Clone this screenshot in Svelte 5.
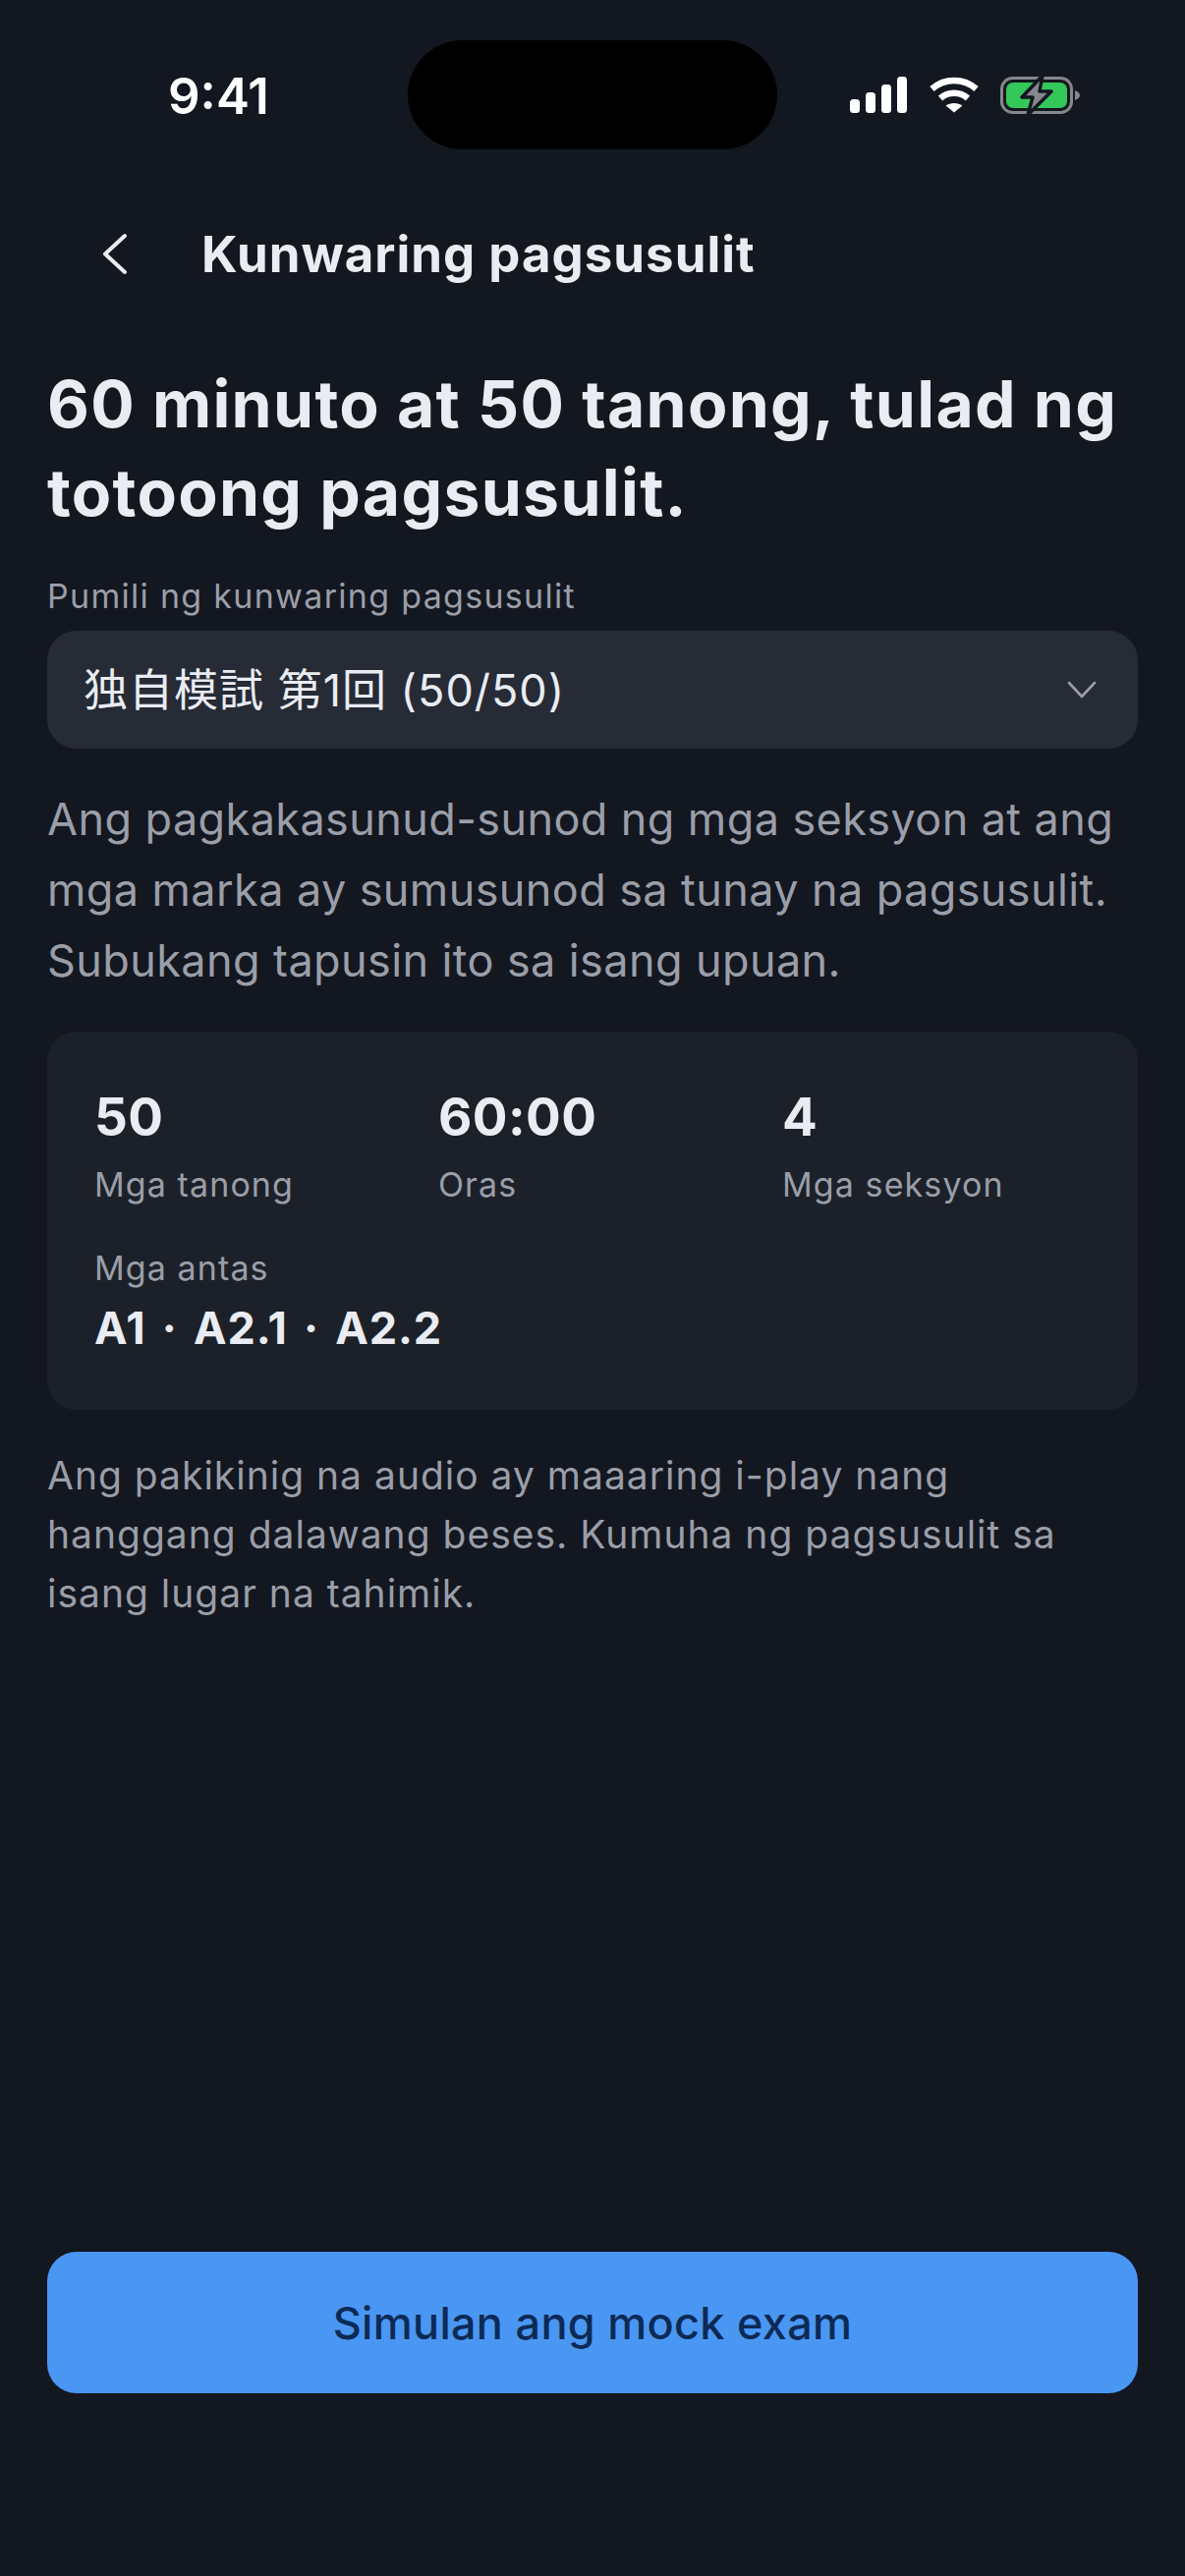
<script lang="ts">
  const stats = [
    { value: '50', label: 'Mga tanong' },
    { value: '60:00', label: 'Oras' },
    { value: '4', label: 'Mga seksyon' }
  ];
</script>

<div class="screen">
  <header class="status">
    <span class="time">9:41</span>
    <div class="island"></div>
    <div class="status-icons">
      <svg class="signal" width="58" height="37" viewBox="0 0 58 37" fill="#fff">
        <rect x="0" y="23" width="10" height="14" rx="3.5" />
        <rect x="16" y="16" width="10" height="21" rx="3.5" />
        <rect x="32" y="8" width="10" height="29" rx="3.5" />
        <rect x="48" y="0" width="10" height="37" rx="3.5" />
      </svg>
      <svg class="wifi" width="50" height="37" viewBox="0 0 50 37" fill="none" stroke="#fff" stroke-width="6.5">
        <path d="M2.5 12.5C15 1 35 1 47.5 12.5" />
        <path d="M11 22C19 15 31 15 39 22" />
        <path d="M25 36.5 L16.5 29.5C21 26 29 26 33.5 29.5Z" fill="#fff" stroke="none" />
      </svg>
      <svg class="battery" width="82" height="42" viewBox="0 0 82 42">
        <rect x="1.5" y="3.5" width="71" height="35" rx="11" fill="none" stroke="#85878c" stroke-width="3" />
        <rect x="6" y="8" width="62" height="26" rx="7" fill="#34c759" />
        <path d="M76 16v10c3-1 5-3 5-5s-2-4-5-5Z" fill="#85878c" />
        <path d="M43 1 22 23h11l-5 18 24-24H40Z" fill="#85878c" stroke="#131720" stroke-width="3.5" stroke-linejoin="round" />
      </svg>
    </div>
  </header>

  <nav class="topbar">
    <svg class="back" width="27" height="43" viewBox="0 0 27 43" fill="none" stroke="#e9ecf2" stroke-width="4" stroke-linecap="round" stroke-linejoin="round">
      <path d="M24 3 4 21.5 24 40" />
    </svg>
    <h2>Kunwaring pagsusulit</h2>
  </nav>

  <main class="content">
    <h1>60 minuto at 50 tanong, tulad ng totoong pagsusulit.</h1>

    <div class="field-label">Pumili ng kunwaring pagsusulit</div>
    <div class="select">
      <span>独自模試 第1回 (50/50)</span>
      <svg width="30" height="18" viewBox="0 0 30 18" fill="none" stroke="#9a9ea8" stroke-width="2.6" stroke-linecap="round" stroke-linejoin="round">
        <path d="M2 2 15 16 28 2" />
      </svg>
    </div>

    <p class="intro">Ang pagkakasunud-sunod ng mga seksyon at ang mga marka ay sumusunod sa tunay na pagsusulit. Subukang tapusin ito sa isang upuan.</p>

    <section class="card">
      <div class="stats">
        {#each stats as stat}
          <div>
            <div class="value">{stat.value}</div>
            <div class="label">{stat.label}</div>
          </div>
        {/each}
      </div>
      <div class="label levels-label">Mga antas</div>
      <div class="levels">A1 · A2.1 · A2.2</div>
    </section>

    <p class="note">Ang pakikinig na audio ay maaaring i-play nang hanggang dalawang beses. Kumuha ng pagsusulit sa isang lugar na tahimik.</p>
  </main>

  <button class="start">Simulan ang mock exam</button>
</div>

<style>
  :global(body) {
    margin: 0;
    background: #131720;
  }

  .screen {
    height: 2622px;
    display: flex;
    flex-direction: column;
    background: #131720;
    font-family: Inter, 'Noto Sans CJK JP', sans-serif;
    overflow: hidden;
  }

  .status {
    display: grid;
    grid-template-columns: 1fr 376px 1fr;
    align-items: center;
    height: 111px;
    margin-top: 41px;
  }

  .time {
    padding: 2px 0 0 171px;
    font-size: 51px;
    font-weight: 600;
    color: #fff;
  }

  .island {
    height: 111px;
    border-radius: 56px;
    background: #000;
  }

  .status-icons {
    display: flex;
    align-items: center;
    padding-left: 74px;
  }

  .wifi {
    margin-left: 23px;
  }

  .battery {
    margin-left: 22px;
  }

  .topbar {
    display: flex;
    align-items: center;
    height: 84px;
    margin-top: 64px;
    padding-left: 103px;
  }

  .topbar h2 {
    margin: 0 0 0 75px;
    font-size: 51px;
    font-weight: 700;
    letter-spacing: 1px;
    color: #e9ecf2;
  }

  .content {
    padding: 0 48px;
  }

  h1 {
    margin: 66px 0 0;
    font-size: 66px;
    line-height: 90px;
    font-weight: 700;
    letter-spacing: 1.3px;
    color: #e9ecf2;
  }

  .field-label {
    margin-top: 39px;
    font-size: 34px;
    line-height: 44px;
    letter-spacing: 1.3px;
    color: #9a9ea8;
  }

  .select {
    display: flex;
    align-items: center;
    justify-content: space-between;
    height: 120px;
    margin-top: 13px;
    padding: 0 42px 0 37px;
    border-radius: 30px;
    background: #262b36;
    font-size: 45px;
    letter-spacing: 1px;
    color: #e9ecf2;
  }

  .select span {
    padding-bottom: 5px;
  }

  .intro {
    margin: 36px 0 0;
    font-size: 45px;
    line-height: 72px;
    letter-spacing: 0.4px;
    color: #9a9ea8;
  }

  .card {
    height: 385px;
    box-sizing: border-box;
    margin-top: 36px;
    padding: 48px;
    border-radius: 30px;
    background: #1c2129;
  }

  .stats {
    display: grid;
    grid-template-columns: repeat(3, 350px);
  }

  .value {
    font-size: 53px;
    line-height: 78px;
    font-weight: 700;
    letter-spacing: 0.4px;
    color: #e9ecf2;
  }

  .label {
    margin-top: 8px;
    font-size: 34px;
    line-height: 44px;
    letter-spacing: 1.1px;
    color: #9a9ea8;
  }

  .levels-label {
    margin-top: 41px;
  }

  .levels {
    margin-top: 9px;
    font-size: 45px;
    line-height: 60px;
    font-weight: 700;
    letter-spacing: 0.8px;
    word-spacing: 5px;
    color: #e9ecf2;
  }

  .note {
    max-width: 1050px;
    margin: 37px 0 0;
    font-size: 39px;
    line-height: 60px;
    letter-spacing: 1px;
    color: #9a9ea8;
  }

  .start {
    display: block;
    height: 144px;
    margin: auto 48px 186px;
    padding: 0;
    border: none;
    border-radius: 30px;
    background: #4a96f3;
    color: #0d2a55;
    font-family: inherit;
    font-size: 45px;
    font-weight: 500;
    letter-spacing: 0.3px;
  }
</style>
